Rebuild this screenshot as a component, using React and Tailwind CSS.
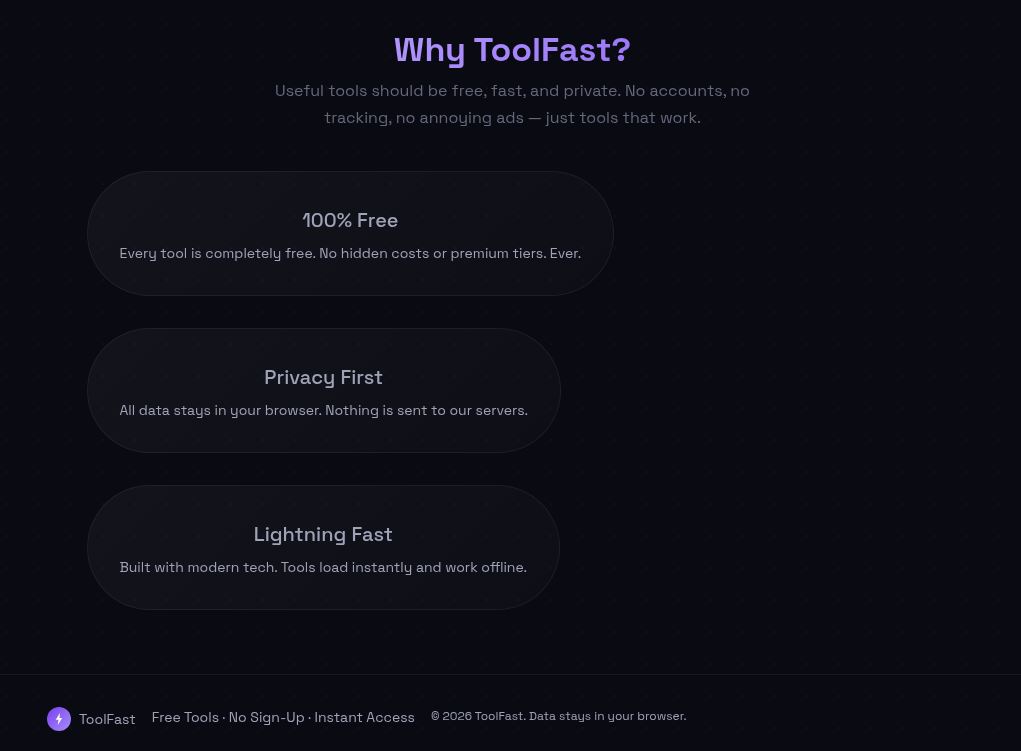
import React from "react";

const features = [
  {
    title: "100% Free",
    text: "Every tool is completely free. No hidden costs or premium tiers. Ever.",
  },
  {
    title: "Privacy First",
    text: "All data stays in your browser. Nothing is sent to our servers.",
  },
  {
    title: "Lightning Fast",
    text: "Built with modern tech. Tools load instantly and work offline.",
  },
];

function FeatureCard({ title, text }) {
  return (
    <article className="w-fit rounded-full border border-white/6 bg-linear-135 from-white/4 to-white/2 p-8 text-center">
      <h3 className="mb-[7px] text-xl leading-8 font-medium text-[#a0a3b8]">{title}</h3>
      <p className="text-sm leading-5 text-[#a0a3b8]">{text}</p>
    </article>
  );
}

function LogoMark() {
  return (
    <span className="flex size-6 items-center justify-center rounded-full bg-linear-135 from-[#7c3aed] to-[#a78bfa]">
      <svg viewBox="0 0 24 24" className="size-3 fill-white" aria-hidden="true">
        <path d="M14 0 5.5 13.5H11L9.5 24 18.5 10H13z" />
      </svg>
    </span>
  );
}

export default function App() {
  return (
    <div className="min-h-screen bg-[#0a0a12] bg-[radial-gradient(circle,rgba(99,102,241,0.07)_1px,transparent_1px)] bg-size-[32px_32px] bg-position-[-9px_8px] font-['Space_Grotesk','Inter',sans-serif] text-[#a0a3b8]">
      <div className="will-change-transform">
        <main className="mx-auto max-w-4xl px-6 pt-[30px] pb-16">
          <header className="mb-10 pl-1 text-center">
            <h2 className="mb-[7px] text-[34px] leading-10 font-bold">
              <span className="bg-linear-135 from-[#b197fc] to-[#9b74f8] bg-clip-text text-transparent">
                Why ToolFast?
              </span>
            </h2>
            <p className="mx-auto max-w-[500px] text-base leading-[27px] text-[#64687a]">
              Useful tools should be free, fast, and private. No accounts, no tracking, no annoying
              ads — just tools that work.
            </p>
          </header>
          <section className="flex flex-col gap-8">
            {features.map((feature) => (
              <FeatureCard key={feature.title} {...feature} />
            ))}
          </section>
        </main>
        <footer className="border-t border-white/6 px-[47px] pt-8 pb-5">
          <div className="flex flex-wrap items-start gap-4">
            <div className="flex items-center gap-2">
              <LogoMark />
              <span className="text-sm leading-5">ToolFast</span>
            </div>
            <p className="text-sm leading-5">Free Tools · No Sign-Up · Instant Access</p>
            <p className="text-xs leading-[18px]">© 2026 ToolFast. Data stays in your browser.</p>
          </div>
        </footer>
      </div>
    </div>
  );
}
